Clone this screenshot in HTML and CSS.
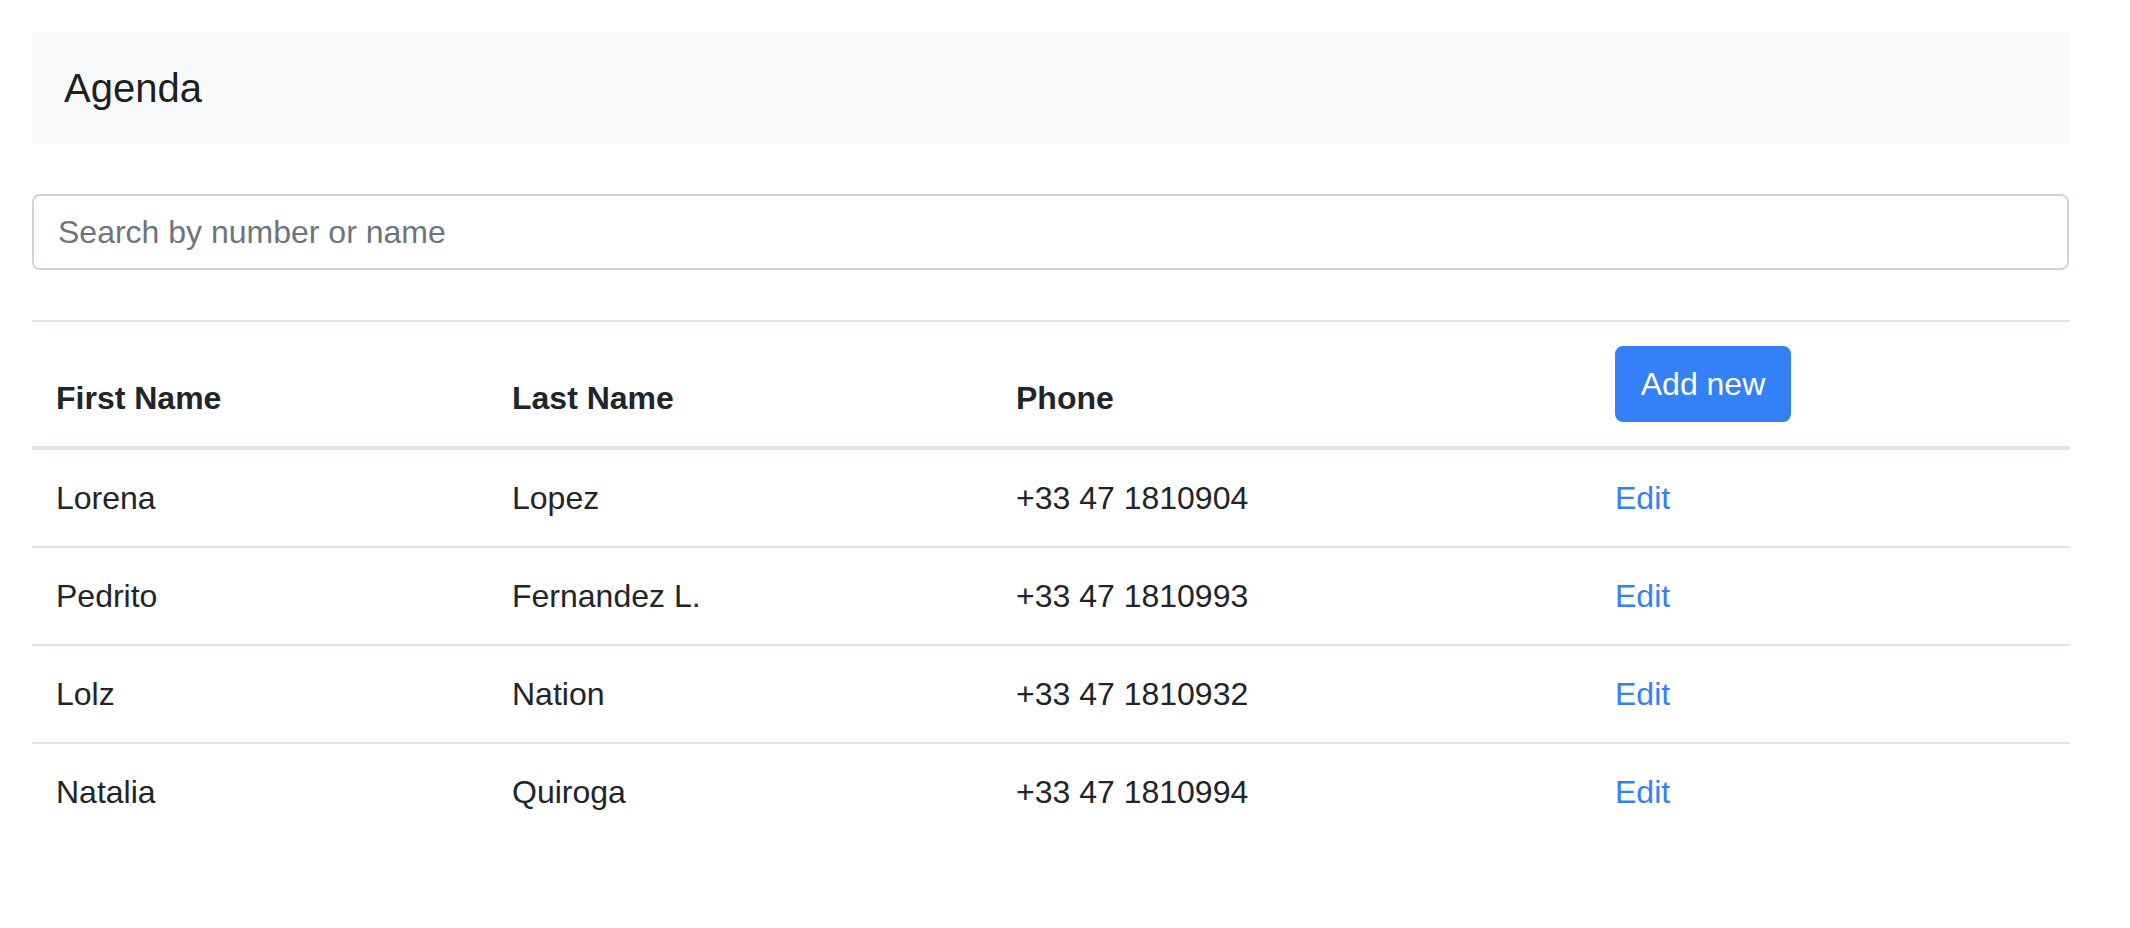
FILE: index.html
```html
<!DOCTYPE html>
<html lang="en">
<head>
<meta charset="utf-8">
<title>Agenda</title>
<link rel="stylesheet" href="styles.css">
</head>
<body>
<div class="page">
  <nav class="navbar">
    <span class="brand">Agenda</span>
  </nav>

  <input class="search" type="text" placeholder="Search by number or name">

  <table class="table">
    <colgroup>
      <col class="col-first">
      <col class="col-last">
      <col class="col-phone">
      <col class="col-action">
    </colgroup>
    <thead>
      <tr>
        <th>First Name</th>
        <th>Last Name</th>
        <th>Phone</th>
        <th><button class="btn" type="button">Add new</button></th>
      </tr>
    </thead>
    <tbody>
      <tr>
        <td>Lorena</td>
        <td>Lopez</td>
        <td>+33 47 1810904</td>
        <td><a class="link" href="#">Edit</a></td>
      </tr>
      <tr>
        <td>Pedrito</td>
        <td>Fernandez L.</td>
        <td>+33 47 1810993</td>
        <td><a class="link" href="#">Edit</a></td>
      </tr>
      <tr>
        <td>Lolz</td>
        <td>Nation</td>
        <td>+33 47 1810932</td>
        <td><a class="link" href="#">Edit</a></td>
      </tr>
      <tr>
        <td>Natalia</td>
        <td>Quiroga</td>
        <td>+33 47 1810994</td>
        <td><a class="link" href="#">Edit</a></td>
      </tr>
    </tbody>
  </table>
</div>
</body>
</html>
```

FILE: styles.css
```css
* {
  box-sizing: border-box;
}

html, body {
  margin: 0;
  padding: 0;
  background: #ffffff;
}

body {
  font-family: "Liberation Sans", Arial, Helvetica, sans-serif;
  font-size: 32px;
  line-height: 48px;
  color: #212529;
}

.page {
  margin: 32px 61px 0 32px;
  display: flex;
  flex-direction: column;
  gap: 50px;
}

.navbar {
  background: #f8f9fa;
  padding: 16px 32px;
  height: 112px;
  display: flex;
  align-items: center;
}

.brand {
  font-size: 40px;
  line-height: 60px;
  padding: 10px 0;
  color: rgba(0, 0, 0, 0.9);
}

.search {
  display: block;
  width: 100%;
  height: 76px;
  padding: 12px 24px;
  border: 2px solid #ced4da;
  border-radius: 8px;
  font-family: "Liberation Sans", Arial, Helvetica, sans-serif;
  font-size: 32px;
  line-height: 48px;
  color: #495057;
  background: #ffffff;
  outline: none;
}

.search::placeholder {
  color: #6c757d;
  opacity: 1;
}

.table {
  width: 100%;
  border-collapse: collapse;
  table-layout: fixed;
  color: #212529;
}

.col-first { width: 456px; }
.col-last { width: 504px; }
.col-phone { width: 599px; }
.col-action { width: 478px; }

.table th,
.table td {
  padding: 24px;
  text-align: left;
  vertical-align: top;
  border-top: 2px solid #dee2e6;
  line-height: 48px;
}

.table th {
  font-weight: bold;
  vertical-align: bottom;
  border-bottom: 4px solid #dee2e6;
}

.btn {
  display: inline-block;
  font-family: "Liberation Sans", Arial, Helvetica, sans-serif;
  font-size: 32px;
  line-height: 48px;
  font-weight: normal;
  white-space: nowrap;
  color: #ffffff;
  background: #3480f6;
  border: 2px solid #3480f6;
  border-radius: 8px;
  padding: 12px 0;
  height: 76px;
  width: 176px;
  text-align: center;
  cursor: pointer;
}

.link {
  color: #3480f6;
  text-decoration: none;
}
```
